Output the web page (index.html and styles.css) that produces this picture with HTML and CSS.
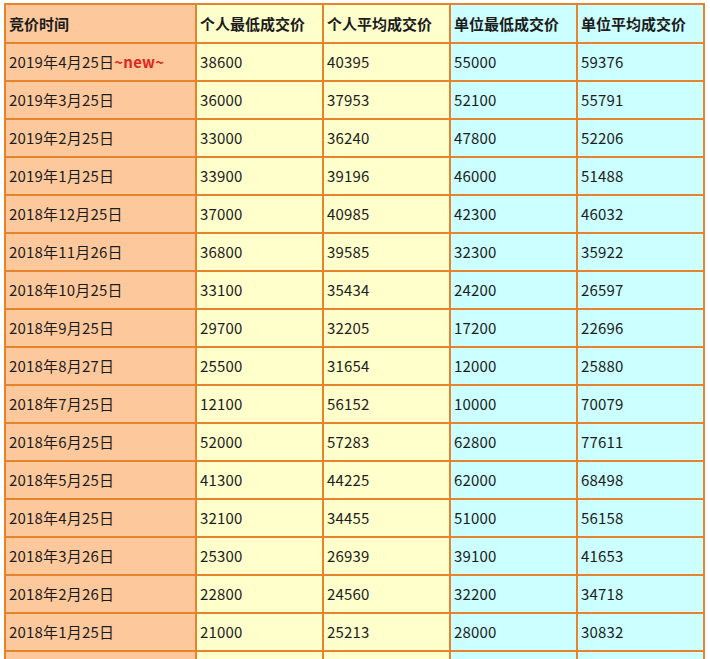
FILE: index.html
```html
<!DOCTYPE html>
<html lang="zh-CN">
<head>
<meta charset="utf-8">
<title>竞价时间</title>
<link rel="stylesheet" href="styles.css">
</head>
<body>
<table class="price-table">
  <colgroup>
    <col class="c-date">
    <col class="c-num">
    <col class="c-num">
    <col class="c-num">
    <col class="c-num">
  </colgroup>
  <thead>
    <tr>
      <th class="date">竞价时间</th>
      <th class="yel">个人最低成交价</th>
      <th class="yel">个人平均成交价</th>
      <th class="cyan">单位最低成交价</th>
      <th class="cyan">单位平均成交价</th>
    </tr>
  </thead>
  <tbody>
    <tr><td class="date">2019年4月25日<span class="new">~new~</span></td><td class="yel">38600</td><td class="yel">40395</td><td class="cyan">55000</td><td class="cyan">59376</td></tr>
    <tr><td class="date">2019年3月25日</td><td class="yel">36000</td><td class="yel">37953</td><td class="cyan">52100</td><td class="cyan">55791</td></tr>
    <tr><td class="date">2019年2月25日</td><td class="yel">33000</td><td class="yel">36240</td><td class="cyan">47800</td><td class="cyan">52206</td></tr>
    <tr><td class="date">2019年1月25日</td><td class="yel">33900</td><td class="yel">39196</td><td class="cyan">46000</td><td class="cyan">51488</td></tr>
    <tr><td class="date">2018年12月25日</td><td class="yel">37000</td><td class="yel">40985</td><td class="cyan">42300</td><td class="cyan">46032</td></tr>
    <tr><td class="date">2018年11月26日</td><td class="yel">36800</td><td class="yel">39585</td><td class="cyan">32300</td><td class="cyan">35922</td></tr>
    <tr><td class="date">2018年10月25日</td><td class="yel">33100</td><td class="yel">35434</td><td class="cyan">24200</td><td class="cyan">26597</td></tr>
    <tr><td class="date">2018年9月25日</td><td class="yel">29700</td><td class="yel">32205</td><td class="cyan">17200</td><td class="cyan">22696</td></tr>
    <tr><td class="date">2018年8月27日</td><td class="yel">25500</td><td class="yel">31654</td><td class="cyan">12000</td><td class="cyan">25880</td></tr>
    <tr><td class="date">2018年7月25日</td><td class="yel">12100</td><td class="yel">56152</td><td class="cyan">10000</td><td class="cyan">70079</td></tr>
    <tr><td class="date">2018年6月25日</td><td class="yel">52000</td><td class="yel">57283</td><td class="cyan">62800</td><td class="cyan">77611</td></tr>
    <tr><td class="date">2018年5月25日</td><td class="yel">41300</td><td class="yel">44225</td><td class="cyan">62000</td><td class="cyan">68498</td></tr>
    <tr><td class="date">2018年4月25日</td><td class="yel">32100</td><td class="yel">34455</td><td class="cyan">51000</td><td class="cyan">56158</td></tr>
    <tr><td class="date">2018年3月26日</td><td class="yel">25300</td><td class="yel">26939</td><td class="cyan">39100</td><td class="cyan">41653</td></tr>
    <tr><td class="date">2018年2月26日</td><td class="yel">22800</td><td class="yel">24560</td><td class="cyan">32200</td><td class="cyan">34718</td></tr>
    <tr><td class="date">2018年1月25日</td><td class="yel">21000</td><td class="yel">25213</td><td class="cyan">28000</td><td class="cyan">30832</td></tr>
    <tr><td class="date"></td><td class="yel"></td><td class="yel"></td><td class="cyan"></td><td class="cyan"></td></tr>
  </tbody>
</table>
</body>
</html>
```

FILE: styles.css
```css
html, body {
  margin: 0;
  padding: 0;
  background: #ffffff;
}

body {
  padding: 3px 0 0 4px;
  font-family: "Noto Sans CJK SC", "Noto Sans", sans-serif;
  color: #1c1c1c;
}

.price-table {
  border-collapse: collapse;
  table-layout: fixed;
  width: 699px;
  font-size: 15px;
}

.c-date { width: 191px; }
.c-num { width: 127px; }

.price-table th,
.price-table td {
  border: 2px solid #e5842c;
  padding: 0 3px;
  text-align: left;
  vertical-align: middle;
  white-space: nowrap;
  overflow: hidden;
  line-height: 20px;
}

.price-table th {
  height: 37px;
  font-weight: bold;
}

.price-table td {
  height: 36px;
  letter-spacing: 0.2px;
}

.date { background: #fdc99c; }
.yel { background: #ffffcc; }
.cyan { background: #ccffff; }

.new {
  color: #e0261c;
  font-weight: bold;
}
```
